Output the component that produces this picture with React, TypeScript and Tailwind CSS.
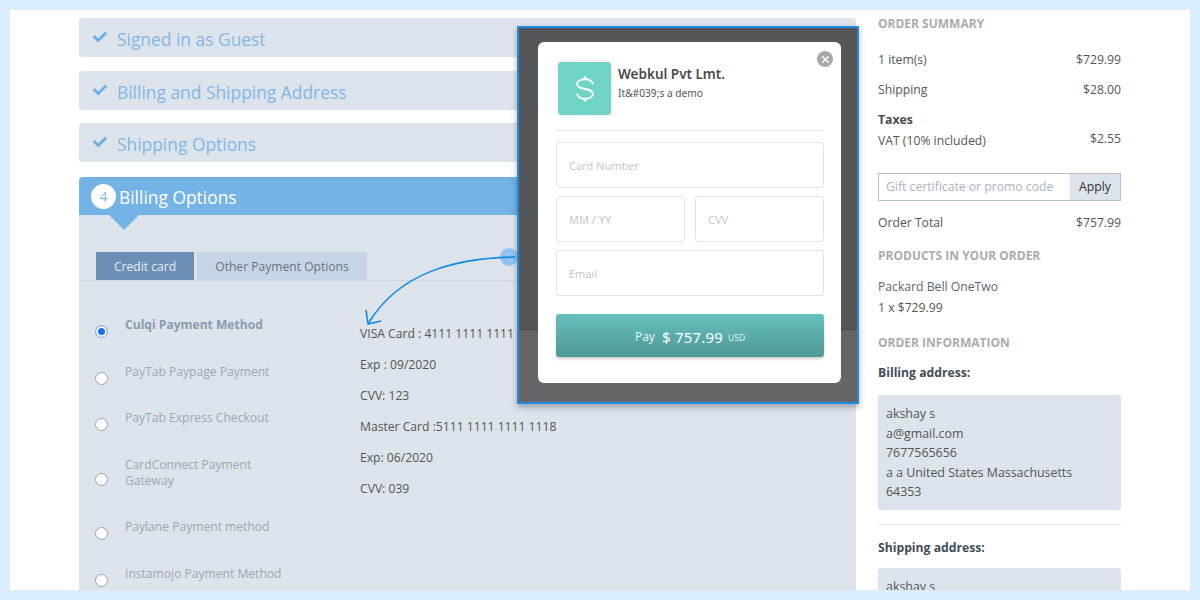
import { FaCheck } from 'react-icons/fa'
import { X } from 'lucide-react'

const methods = [
  { name: 'Culqi Payment Method', active: true },
  { name: 'PayTab Paypage Payment' },
  { name: 'PayTab Express Checkout' },
  { name: 'CardConnect Payment Gateway' },
  { name: 'Paylane Payment method' },
  { name: 'Instamojo Payment Method' },
]

const cards = ['VISA Card : 4111 1111 1111 1111', 'Exp : 09/2020', 'CVV: 123', 'Master Card :5111 1111 1111 1118', 'Exp: 06/2020', 'CVV: 039']

function DoneStep({ title, className }: { title: string; className: string }) {
  return (
    <div className={`flex h-[39px] items-center rounded-sm bg-[#dce3ea] pl-[14px] ${className}`}>
      <FaCheck className="mb-[2px] h-[14px] w-[14px] text-[#6cb0e8]" />
      <span className="ml-[10px] pt-[4px] text-[17.4px] text-[#83b7e6]">{title}</span>
    </div>
  )
}

function SummaryRow({ label, value, className = '' }: { label: string; value: string; className?: string }) {
  return (
    <div className={`flex justify-between text-[12.2px] leading-[18px] text-[#555] ${className}`}>
      <span>{label}</span>
      <span>{value}</span>
    </div>
  )
}

function SideTitle({ children, className = '' }: { children: string; className?: string }) {
  return <h3 className={`text-[12px] leading-[16px] font-bold text-[#a9abae] ${className}`}>{children}</h3>
}

function Field({ placeholder, className = '' }: { placeholder: string; className?: string }) {
  return (
    <div className={`flex h-[46px] items-center rounded-[3px] border border-[#e3e3e3] pt-[3px] pl-[12px] text-[11px] text-[#c8c8c8] ${className}`}>
      {placeholder}
    </div>
  )
}

function PaymentModal() {
  return (
    <div className="absolute top-[16px] left-[507px] h-[378px] w-[342px] border-2 border-[#1e8ae0] bg-[linear-gradient(#55565a_0,#55565a_301px,#46474a_301px,#66666a_303px)] pt-[14px] pl-[19px] shadow-[0_3px_6px_rgba(0,0,0,0.3)] [font-family:'Noto_Sans',sans-serif]">
      <div className="relative h-[341px] w-[303px] rounded-[6px] bg-white pt-[18px] pr-[17px] pl-[18px]">
        <div className="absolute top-[9px] right-[8px] flex h-[16px] w-[16px] items-center justify-center rounded-full bg-[#a8a8a8]">
          <X className="h-[11px] w-[11px] text-white" strokeWidth={3} />
        </div>
        <div className="flex h-[71px] border-b border-[#e6e6e6]">
          <div className="flex h-[57px] w-[57px] items-center justify-center rounded-[6px] border-2 border-[#f4f4f4] bg-[#6fd3c5]">
            <svg className="h-[32px] w-[20px]" viewBox="0 0 24 32" fill="none">
              <path d="M21.5 10.5C21 6.500 17 4.500 12 4.500C7 4.500 2.500 6.500 2.500 10C2.500 14 7 15 12 16C17 17 21.500 18 21.500 22C21.500 25.500 17 27.500 12 27.500C7 27.500 3 25.500 2.500 21.500" stroke="white" strokeWidth="2.2" />
              <path d="M12 0L15.500 4.500H8.500ZM12 32L15.500 27.500H8.500Z" fill="white" />
            </svg>
          </div>
          <div className="ml-[5px] pt-[5px]">
            <div className="text-[13.5px] leading-[19px] font-semibold text-[#4a4a4a]">Webkul Pvt Lmt.</div>
            <div className="mt-[1px] text-[10.2px] leading-[16px] text-[#555]">It&amp;#039;s a demo</div>
          </div>
        </div>
        <Field placeholder="Card Number" className="mt-[11px]" />
        <div className="mt-[8px] flex gap-[10px]">
          <Field placeholder="MM / YY" className="flex-1" />
          <Field placeholder="CVV" className="flex-1" />
        </div>
        <Field placeholder="Email" className="mt-[8px]" />
        <div className="mt-[18px] flex h-[43px] items-center justify-center rounded-[3px] bg-gradient-to-b from-[#66c0bc] to-[#4f9896] pt-[3px] text-white shadow-[0_2px_3px_rgba(0,0,0,0.2)]">
          <span className="text-[12px] text-[#dff1f0]">Pay</span>
          <span className="ml-[7px] text-[15px] tracking-[0.2px]">$ 757.99</span>
          <span className="mt-[2px] ml-[5px] text-[8.5px] text-[#dff1f0]">USD</span>
        </div>
      </div>
    </div>
  )
}

export default function App() {
  return (
    <div className="h-[600px] w-[1200px] overflow-hidden bg-[#daeefe] p-[10px] [font-family:'Open_Sans',sans-serif]">
      <div className="relative flex h-[580px] overflow-hidden bg-white pt-[8px] pl-[69px]">
        <main className="w-[777px] shrink-0">
          <DoneStep title="Signed in as Guest" className="" />
          <DoneStep title="Billing and Shipping Address" className="mt-[14px]" />
          <DoneStep title="Shipping Options" className="mt-[13px]" />
          <div className="mt-[15px] h-[600px] rounded-sm bg-[#dce3ea]">
            <div className="relative flex h-[38px] items-center rounded-t-sm bg-[#74b3e6] pl-[12px]">
              <span className="flex h-[25px] w-[25px] items-center justify-center rounded-full bg-white text-[14px] text-[#83b7e6]">4</span>
              <span className="ml-[3px] pt-[3px] text-[17.4px] text-white">Billing Options</span>
              <span className="absolute top-[38px] left-[30px] h-0 w-0 border-x-[15px] border-t-[15px] border-x-transparent border-t-[#74b3e6]" />
            </div>
            <div className="mt-[37px] flex h-[29px] border-b border-[#cdd5dd] pl-[17px] text-[12.1px] leading-[30px]">
              <span className="h-[28px] w-[98px] bg-[#6b8fb5] text-center text-[#e6edf4]">Credit card</span>
              <span className="ml-[3px] h-[28px] w-[170px] bg-[#c5d5e5] text-center text-[#68737e]">Other Payment Options</span>
            </div>
            <div className="flex pt-[36px] pl-[16px]">
              <div className="flex w-[265px] flex-col gap-[17.5px]">
                {methods.map((m) => (
                  <div key={m.name} className="flex items-center">
                    <span className={`h-[13px] w-[13px] shrink-0 rounded-full border ${m.active ? 'border-[#8fb6ee] bg-[#1a6ff0] shadow-[inset_0_0_0_2px_white]' : 'border-[#9aa3ac] bg-white'}`} />
                    <span className={`ml-[17px] w-[160px] pb-[13px] text-[12.1px] leading-[16px] ${m.active ? 'font-bold text-[#8a9bb0]' : 'text-[#9aa8b7]'}`}>{m.name}</span>
                  </div>
                ))}
              </div>
              <div className="pt-[1px] text-[12.15px] leading-[31.1px] whitespace-nowrap text-[#555]">
                {cards.map((c, i) => (
                  <div key={i}>{c}</div>
                ))}
              </div>
            </div>
          </div>
        </main>

        <aside className="ml-[22px] w-[243px] shrink-0">
          <SideTitle className="mt-[-2px]">ORDER SUMMARY</SideTitle>
          <SummaryRow label="1 item(s)" value="$729.99" className="mt-[19px]" />
          <SummaryRow label="Shipping" value="$28.00" className="mt-[12px]" />
          <div className="mt-[12px] text-[12.2px] leading-[18px] font-bold text-[#444c56]">Taxes</div>
          <div className="mt-[3px] flex justify-between text-[12.2px] leading-[18px] text-[#555]">
            <span>VAT (10% included)</span>
            <span className="mt-[-2px]">$2.55</span>
          </div>
          <div className="mt-[23px] flex h-[28px] border border-[#b3c0cf] text-[12.2px] leading-[26px]">
            <span className="flex-1 pl-[7px] text-[#a9b4c2]">Gift certificate or promo code</span>
            <span className="w-[50px] bg-[#dce3ea] text-center text-[#333]">Apply</span>
          </div>
          <SummaryRow label="Order Total" value="$757.99" className="mt-[13px]" />
          <SideTitle className="mt-[16px]">PRODUCTS IN YOUR ORDER</SideTitle>
          <div className="mt-[12px] text-[12.2px] leading-[21px] text-[#5b6670]">
            Packard Bell OneTwo
            <div className="text-[#555]">1 x $729.99</div>
          </div>
          <SideTitle className="mt-[17px]">ORDER INFORMATION</SideTitle>
          <div className="mt-[13px] text-[12.2px] leading-[18px] font-bold text-[#444c56]">Billing address:</div>
          <div className="mt-[13px] rounded-[3px] bg-[#dce3ea] px-[8px] pt-[9px] pb-[8px] text-[12.4px] leading-[19.6px] text-[#555]">
            <div>akshay s</div>
            <div>a@gmail.com</div>
            <div>7677565656</div>
            <div>a a United States Massachusetts</div>
            <div>64353</div>
          </div>
          <div className="mt-[14px] border-t border-[#e6e9ec]" />
          <div className="mt-[14px] text-[12.2px] leading-[18px] font-bold text-[#444c56]">Shipping address:</div>
          <div className="mt-[11px] rounded-[3px] bg-[#dce3ea] px-[8px] pt-[9px] text-[12.4px] leading-[19.6px] text-[#555]">akshay s</div>
        </aside>

        <svg className="absolute top-[230px] left-[340px] h-[100px] w-[180px]" viewBox="0 0 180 100" fill="none">
          <circle cx="159" cy="17" r="9" fill="#90c4f0" />
          <path d="M165 17C110 18 50 30 18 84" stroke="#0f8ae8" strokeWidth="1.6" />
          <path d="M16 70L18 84L31 81" stroke="#0f8ae8" strokeWidth="1.6" />
        </svg>
        <PaymentModal />
      </div>
    </div>
  )
}
